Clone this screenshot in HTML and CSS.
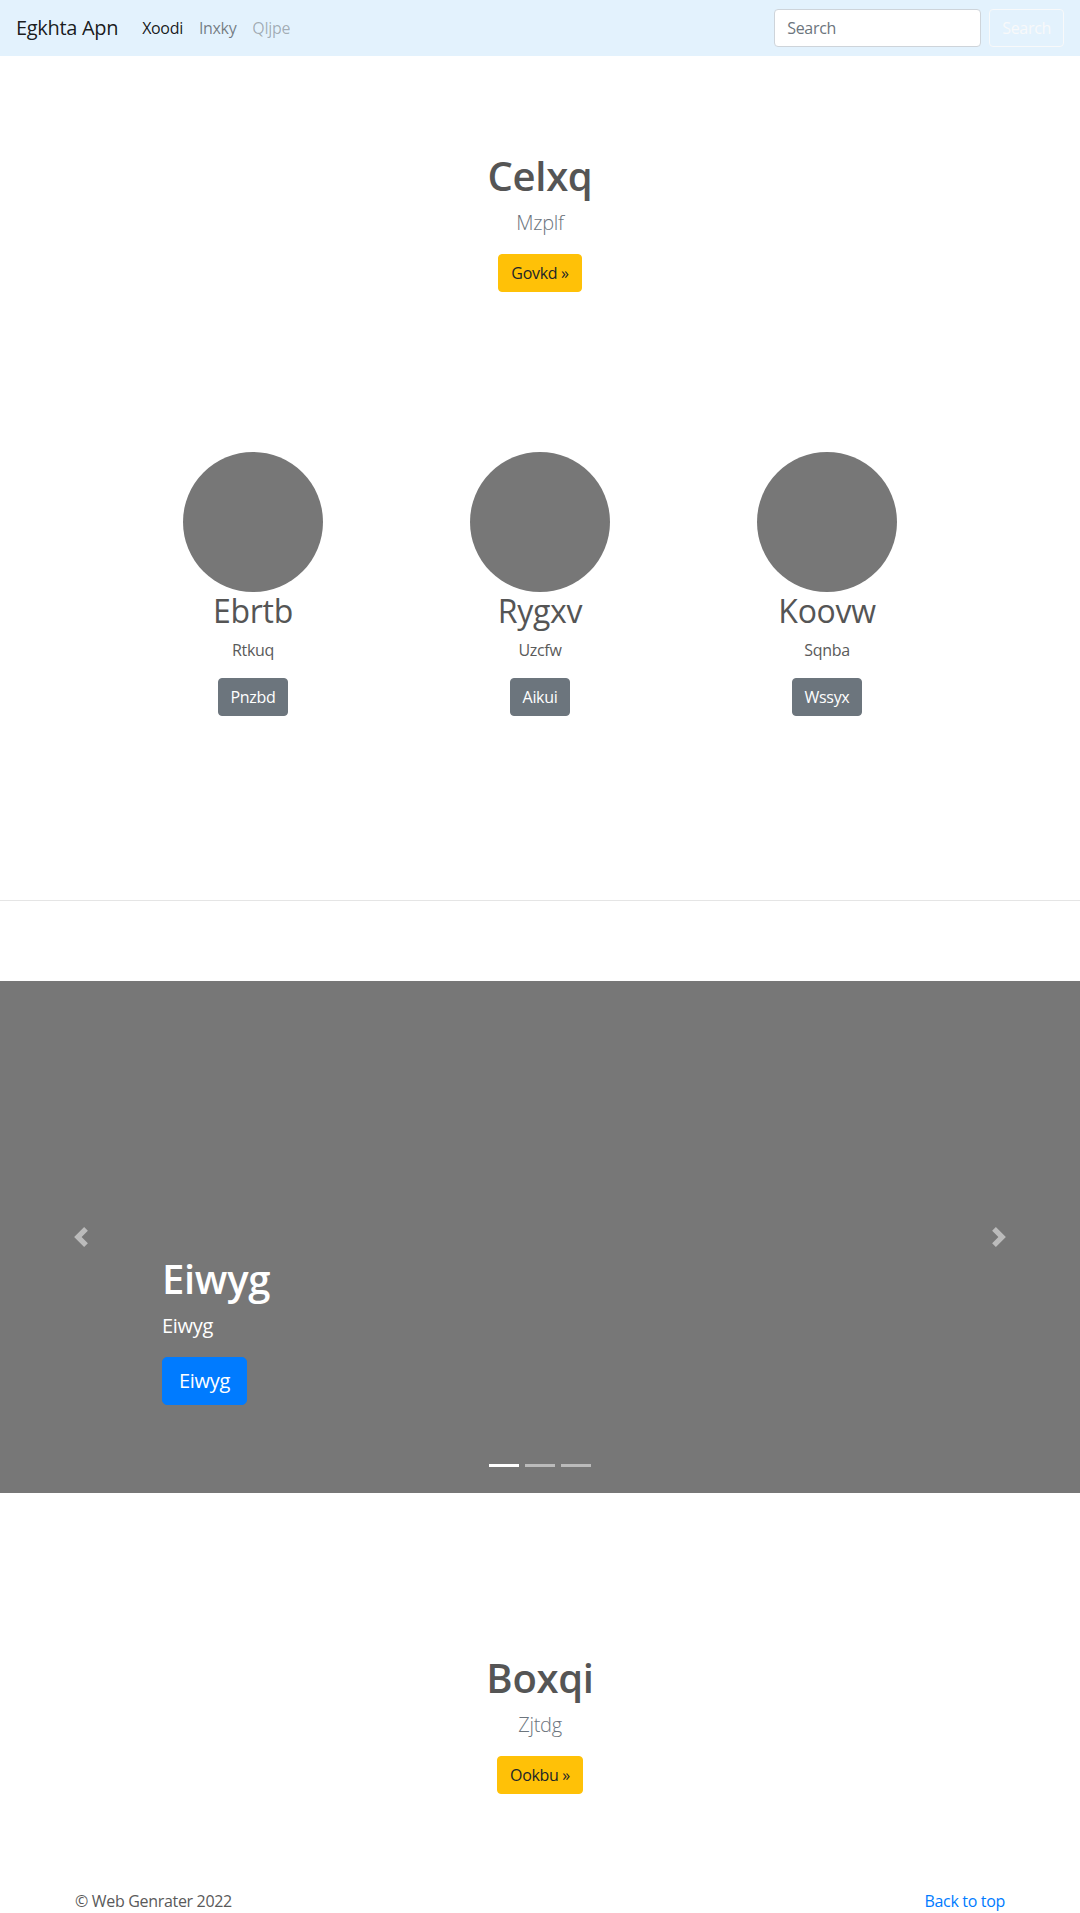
FILE: index.html
```html
<!DOCTYPE html>
<html lang="en">
<head>
<meta charset="utf-8">
<title>Egkhta Apn</title>
<link rel="stylesheet" href="styles.css">
</head>
<body>
<nav class="navbar">
  <a class="brand" href="#">Egkhta Apn</a>
  <ul class="nav">
    <li><a class="nav-link active" href="#">Xoodi</a></li>
    <li><a class="nav-link" href="#">Inxky</a></li>
    <li><a class="nav-link disabled" href="#">Qljpe</a></li>
  </ul>
  <form class="search">
    <input class="search-input" type="text" placeholder="Search">
    <button class="btn btn-outline-light" type="button">Search</button>
  </form>
</nav>

<section class="hero hero-top">
  <h1 class="hero-title">Celxq</h1>
  <p class="lead">Mzplf</p>
  <p class="actions"><a class="btn btn-warning" href="#">Govkd »</a></p>
</section>

<section class="marketing">
  <div class="feature">
    <div class="circle"></div>
    <h2 class="feature-title">Ebrtb</h2>
    <p class="feature-text">Rtkuq</p>
    <p class="actions"><a class="btn btn-secondary" href="#">Pnzbd</a></p>
  </div>
  <div class="feature">
    <div class="circle"></div>
    <h2 class="feature-title">Rygxv</h2>
    <p class="feature-text">Uzcfw</p>
    <p class="actions"><a class="btn btn-secondary" href="#">Aikui</a></p>
  </div>
  <div class="feature">
    <div class="circle"></div>
    <h2 class="feature-title">Koovw</h2>
    <p class="feature-text">Sqnba</p>
    <p class="actions"><a class="btn btn-secondary" href="#">Wssyx</a></p>
  </div>
</section>

<hr class="divider">

<div class="carousel">
  <div class="caption">
    <h1 class="caption-title">Eiwyg</h1>
    <p class="caption-text">Eiwyg</p>
    <p class="actions"><a class="btn btn-primary btn-lg" href="#">Eiwyg</a></p>
  </div>
  <a class="control control-prev" href="#" aria-label="Previous">
    <svg width="20" height="20" viewBox="0 0 8 8"><path fill="#fff" d="M5.25 0l-4 4 4 4 1.5-1.5-2.5-2.5 2.5-2.5-1.5-1.5z"/></svg>
  </a>
  <a class="control control-next" href="#" aria-label="Next">
    <svg width="20" height="20" viewBox="0 0 8 8"><path fill="#fff" d="M2.75 0l-1.5 1.5 2.5 2.5-2.5 2.5 1.5 1.5 4-4-4-4z"/></svg>
  </a>
  <ol class="indicators">
    <li class="indicator active"></li>
    <li class="indicator"></li>
    <li class="indicator"></li>
  </ol>
</div>

<section class="hero hero-bottom">
  <h1 class="hero-title">Boxqi</h1>
  <p class="lead">Zjtdg</p>
  <p class="actions"><a class="btn btn-warning" href="#">Ookbu »</a></p>
</section>

<footer class="footer">
  <p class="copy">© Web Genrater 2022</p>
  <p class="to-top"><a href="#">Back to top</a></p>
</footer>
</body>
</html>
```

FILE: styles.css
```css
* { box-sizing: border-box; }

body {
  margin: 0;
  font-family: "Open Sans", "Noto Sans", "Liberation Sans", sans-serif;
  font-size: 16px;
  line-height: 1.5;
  letter-spacing: -0.02em;
  color: #5a5a5a;
  background: #fff;
}

a { text-decoration: none; }

/* Navbar */
.navbar {
  display: flex;
  align-items: center;
  height: 56px;
  padding: 0 16px;
  background: #e3f2fd;
}
.brand {
  font-size: 20px;
  line-height: 30px;
  color: rgba(0, 0, 0, 0.9);
  margin-right: 16px;
}
.nav {
  display: flex;
  list-style: none;
  margin: 0 auto 0 0;
  padding: 0;
}
.nav-link {
  display: block;
  padding: 8px;
  color: rgba(0, 0, 0, 0.5);
}
.nav-link.active { color: rgba(0, 0, 0, 0.9); }
.nav-link.disabled { color: rgba(0, 0, 0, 0.3); }

.search {
  display: flex;
  align-items: center;
  gap: 8px;
}
.search-input {
  width: 207px;
  height: 38px;
  padding: 6px 12px;
  font-family: inherit;
  font-size: 16px;
  letter-spacing: inherit;
  color: #495057;
  background: #fff;
  border: 1px solid #ced4da;
  border-radius: 4px;
}
.search-input::placeholder { color: #6c757d; }

/* Buttons */
.btn {
  display: inline-block;
  font-family: inherit;
  font-size: 16px;
  letter-spacing: inherit;
  line-height: 24px;
  padding: 6px 12px;
  border: 1px solid transparent;
  border-radius: 4px;
  cursor: pointer;
}
.btn-outline-light {
  color: #f8f9fa;
  background: transparent;
  border-color: #f8f9fa;
}
.btn-warning { color: #212529; background: #ffc107; border-color: #ffc107; }
.btn-secondary { color: #fff; background: #6c757d; border-color: #6c757d; }
.btn-primary { color: #fff; background: #007bff; border-color: #007bff; }
.btn-lg { font-size: 20px; line-height: 30px; padding: 8px 16px; border-radius: 5px; }

.actions { margin: 0; }

/* Hero */
.hero { text-align: center; }
.hero-top { padding-top: 96px; }
.hero-bottom { padding-top: 161px; }
.hero-title {
  margin: 0 0 8px;
  font-size: 40px;
  line-height: 48px;
  font-weight: 600;
  color: #555;
}
.lead {
  margin: 0 0 16px;
  font-size: 20px;
  line-height: 30px;
  font-weight: 300;
  color: #6c757d;
}

/* Marketing */
.marketing {
  display: grid;
  grid-template-columns: repeat(3, 287px);
  justify-content: center;
  padding-top: 160px;
}
.feature { text-align: center; }
.circle {
  width: 140px;
  height: 140px;
  margin: 0 auto;
  border-radius: 50%;
  background: #777;
}
.feature-title {
  margin: 0 0 8px;
  font-size: 32px;
  line-height: 38.4px;
  font-weight: 400;
  color: #555;
}
.feature-text { margin: 0 0 16px; }

.divider {
  margin: 184px 0 80px;
  border: 0;
  border-top: 1px solid #e5e5e5;
  height: 0;
}

/* Carousel */
.carousel {
  position: relative;
  height: 512px;
  background: #777;
  display: flex;
  align-items: flex-end;
  padding: 0 162px 88px;
}
.caption { color: #fff; }
.caption-title {
  margin: 0 0 8px;
  font-size: 40px;
  line-height: 48px;
  font-weight: 600;
}
.caption-text {
  margin: 0 0 16px;
  font-size: 20px;
  line-height: 30px;
}
.control {
  position: absolute;
  top: 0;
  bottom: 0;
  width: 162px;
  display: flex;
  align-items: center;
  justify-content: center;
  opacity: 0.5;
}
.control-prev { left: 0; }
.control-next { right: 0; }
.indicators {
  position: absolute;
  left: 0;
  right: 0;
  bottom: 26px;
  display: flex;
  justify-content: center;
  list-style: none;
  margin: 0;
  padding: 0;
}
.indicator {
  width: 30px;
  height: 3px;
  margin: 0 3px;
  background: #fff;
  opacity: 0.5;
}
.indicator.active { opacity: 1; }

/* Footer */
.footer {
  display: flex;
  justify-content: space-between;
  width: 930px;
  margin: 0 auto;
  padding-top: 95px;
}
.footer p { margin: 0 0 16px; }
.to-top a { color: #007bff; }
```
